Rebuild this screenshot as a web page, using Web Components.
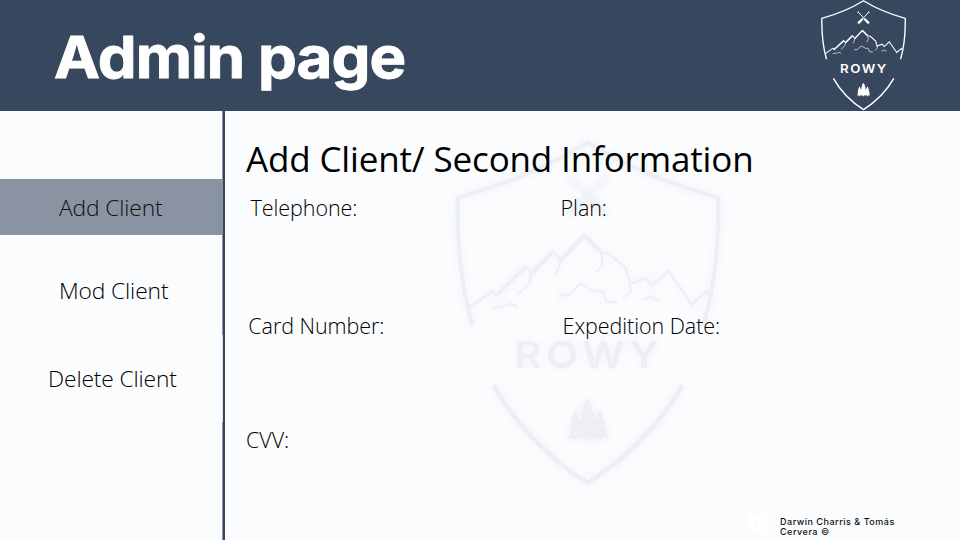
<!DOCTYPE html>
<html lang="en"><head><meta charset="utf-8"><title>Admin page</title>
<style>html,body{margin:0;height:100%;overflow:hidden}body{background:#fafcfe}</style></head>
<body><admin-page></admin-page>
<script>
const define = (name, html) => {
  const t = document.createElement('template');
  t.innerHTML = html;
  customElements.define(name, class extends HTMLElement {
    constructor() { super(); this.attachShadow({mode:'open'}).append(t.content.cloneNode(true)); }
  });
};
define('rowy-logo', `<style>:host{display:block}svg{display:block;width:100%;height:100%;overflow:visible}
.s{fill:none;stroke:currentColor;stroke-linejoin:miter}.ridge{stroke-width:var(--ridge,8)}.tools{filter:var(--tools,none)}text{font:600 112px Inter,sans-serif;fill:currentColor}</style>
<svg viewBox="42 60 798 1038">
<g class="s" stroke-width="13">
<path d="M94 616Q46 450 50 232Q270 172 441 67Q612 172 833 232Q837 450 789 616"/>
<path d="M158 796Q260 975 441 1090Q622 975 726 796" stroke-width="14"/></g>
<g class="s">
<path class="ridge" d="M80 566L155 512L165 527L256 440L271 461L337 395L360 422L431 346L480 395L505 400L555 445L568 492L615 475L635 497L683 452L753 553L797 515L812 535"/>
<path d="M431 346L476 392" stroke-width="13"/><path d="M165 526L256 440M271 461L337 395M362 418L431 345" stroke-width="12"/>
<path d="M271 461L266 490L228 524M361 421L344 467M480 395L486 431L467 456M568 492L571 514L548 532" stroke-width="6"/>
<path d="M352 530L371 521L378 529L418 491L467 516L484 511L497 544L530 549M152 564L174 558L182 562L208 551L232 560M610 540L631 530L657 542" stroke-width="6"/></g>
<g class="tools" fill="currentColor" stroke="currentColor">
<path d="M391 173L466 252M491 173L416 252" stroke-width="9"/>
<path d="M456 232L495 267Q500 282 481 284L444 244ZM426 232L387 267Q382 282 401 284L438 244Z" stroke-width="3"/>
<path d="M386 180L395 168M496 180L487 168" stroke-width="10"/></g>
<text transform="translate(220 745) scale(1.12 1)" textLength="388">ROWY</text>
<path fill="currentColor" d="M440 836L458 867L451 867L464 888L457 889L463 902L478 870L490 892L485 894L496 913L490 915L500 935L494 936L503 954L482 956V963H472V955L446 956V963H434V956L408 955V963H398V956L381 956L389 940L384 939L392 920L386 918L394 898L390 897L404 870L418 902L424 889L417 888L429 867L422 867Z"/>
</svg>`);
define('page-header', `<style>:host{display:flex;justify-content:space-between;align-items:flex-start;height:110.7px;background:#37475e;color:#fff;padding:0 54px 0 53.5px;box-sizing:border-box;flex:none}
h1{margin:22px 0 0;font:700 58px/70px Inter,sans-serif;letter-spacing:-.85px;white-space:nowrap;transform:scaleX(1.063);transform-origin:0 0;-webkit-text-stroke:.9px #fff}
rowy-logo{width:85px;height:110.6px;flex:none;--ridge:10}</style><h1><slot></slot></h1><rowy-logo></rowy-logo>`);
define('nav-item', `<style>:host{display:flex;align-items:center;height:55.5px;box-sizing:border-box;padding-top:2px;font:300 22.8px/30px "Open Sans",sans-serif;letter-spacing:-.12px;color:#000;white-space:nowrap}
:host([active]){background:#8a93a2;color:#111}</style><slot></slot>`);
define('side-nav', `<style>:host{display:grid;grid-template-columns:222px 3px;width:225px;flex:none}
nav{padding-top:68.6px;display:flex;flex-direction:column}
i{background:linear-gradient(90deg,transparent 1px,#37475e 1px),linear-gradient(#8791a0 224px,#dfe3e8 224px 311px,#8791a0 311px)}</style><nav><slot></slot></nav><i></i>`);
define('form-field', `<style>:host{display:block;font:300 21.5px/30px "Open Sans",sans-serif;letter-spacing:-.06px;color:#000;white-space:nowrap}</style><slot></slot>`);
define('page-credit', `<style>:host{display:flex;gap:13px;align-items:flex-start;font:500 9px/10px Inter,sans-serif;letter-spacing:.52px;color:#111}
svg{display:block;width:20px;height:16px;margin-top:-3px}</style><svg viewBox="0 0 20 16"><rect width="20" height="16" rx="2" fill="#fff"/><path d="M8 5.5L12.5 8L8 10.5Z" fill="#fafafb"/></svg><div><slot></slot></div>`);
define('admin-page', `<style>:host{display:flex;flex-direction:column;width:960px;height:540px;background:#fafcfe;overflow:hidden}
.body{display:flex;flex:1;min-height:0}
main{flex:1;position:relative;padding:24.3px 0 0 21px}
.mark{position:absolute;left:229.5px;top:29.3px;width:265.5px;height:346px;color:#edeff3;filter:drop-shadow(0 0 4px #f1f3f6);--tools:blur(8px)}
h2{position:relative;margin:0;font:400 35px/48px "Open Sans",sans-serif;color:#000;white-space:nowrap;letter-spacing:-.15px}
.fields{position:relative;display:grid;grid-template-columns:314.6px 1fr;grid-template-rows:118px 114px 92px;padding-top:10.4px}
page-credit{position:relative;margin-left:501px;width:200px}</style>
<page-header>Admin page</page-header><div class="body">
<side-nav><nav-item active style="padding-left:59px">Add Client</nav-item><nav-item style="padding-left:59px;margin-top:27.7px">Mod Client</nav-item><nav-item style="padding-left:48px;margin-top:32.5px">Delete Client</nav-item></side-nav>
<main><rowy-logo class="mark"></rowy-logo><h2>Add Client/ Second Information</h2>
<div class="fields"><form-field style="padding-left:4.5px">Telephone:</form-field><form-field>Plan:</form-field><form-field style="padding-left:2.3px">Card Number:</form-field><form-field style="padding-left:2px">Expedition Date:</form-field><form-field>CVV:</form-field></div>
<page-credit>Darwin Charris &amp; Tomás<br>Cervera ©</page-credit></main></div>`);
</script></body></html>
